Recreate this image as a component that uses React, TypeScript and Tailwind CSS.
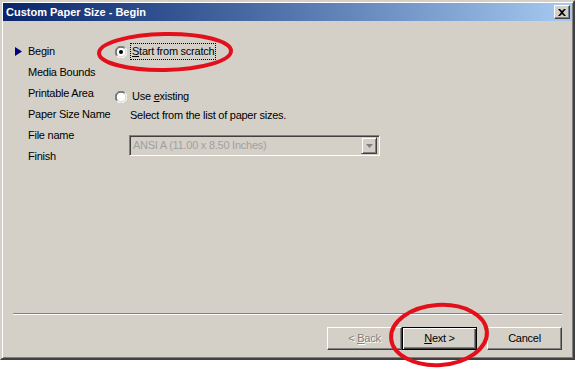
import React from 'react';

const font = { fontFamily: '"Liberation Sans", Arial, sans-serif' };

function Radio({ checked }: { checked?: boolean }) {
  return (
    <svg width="12" height="12" viewBox="0 0 12 12" className="shrink-0">
      <circle cx="6" cy="6" r="5.5" fill="#fff" />
      <path d="M1.8 10.2 A5.5 5.5 0 0 1 10.2 1.8" fill="none" stroke="#808080" strokeWidth="1" />
      <path d="M10.2 1.8 A5.5 5.5 0 0 1 1.8 10.2" fill="none" stroke="#fff" strokeWidth="1" />
      <path d="M2.5 9.5 A4.5 4.5 0 0 1 9.5 2.5" fill="none" stroke="#404040" strokeWidth="1" />
      <path d="M9.5 2.5 A4.5 4.5 0 0 1 2.5 9.5" fill="none" stroke="#d4d0c8" strokeWidth="1" />
      {checked && <circle cx="6" cy="6" r="2" fill="#000" />}
    </svg>
  );
}

const steps = ['Begin', 'Media Bounds', 'Printable Area', 'Paper Size Name', 'File name', 'Finish'];

export default function App() {
  return (
    <div className="relative w-[580px] h-[369px] bg-white overflow-hidden text-[11px] text-black" style={font}>
      <div className="w-[575px] h-[360px] bg-[#d4d0c8] border-2 border-t-[#d4d0c8] border-l-[#d4d0c8] border-r-[#404040] border-b-[#404040] shadow-[inset_1px_1px_0_#fff,inset_-1px_-1px_0_#808080] p-[1px] flex flex-col">
        {/* title bar */}
        <div className="h-[18px] flex items-center justify-between pl-[3px] pr-[2px] bg-gradient-to-r from-[#0a246a] to-[#a6caf0]">
          <span className="text-white font-bold text-[11px] leading-none">Custom Paper Size - Begin</span>
          <div className="w-[16px] h-[14px] bg-[#d4d0c8] border border-t-white border-l-white border-r-[#404040] border-b-[#404040] shadow-[inset_-1px_-1px_0_#808080] flex items-center justify-center">
            <svg width="8" height="7" viewBox="0 0 8 7">
              <path d="M0 0h2l2 2 2-2h2L5 3.5 8 7H6L4 5 2 7H0l3-3.5z" fill="#000" />
            </svg>
          </div>
        </div>

        {/* body */}
        <div className="flex-1 flex pt-[20px] tracking-[-0.25px]">
          <div className="w-[112px] shrink-0 flex flex-col pl-[12px]">
            {steps.map((s, i) => (
              <div key={s} className="h-[21px] flex items-center whitespace-nowrap">
                <div className="w-[13px] shrink-0 flex items-center">
                  {i === 0 && (
                    <svg width="7" height="9" viewBox="0 0 7 9">
                      <path d="M0 0L7 4.5 0 9z" fill="#000080" />
                    </svg>
                  )}
                </div>
                <span>{s}</span>
              </div>
            ))}
          </div>

          <div className="flex flex-col">
            <div className="h-[21px] flex items-center">
              <Radio checked />
              <span className="ml-[3px] h-[17px] px-[1px] flex items-center border border-dotted border-black">
                <span><u>S</u>tart from scratch</span>
              </span>
            </div>
            <div className="h-[21px] mt-[24px] flex items-center">
              <Radio />
              <span className="ml-[5px]">Use <u>e</u>xisting</span>
            </div>
            <div className="h-[16px] flex items-center pl-[15px]">Select from the list of paper sizes.</div>
            <div className="mt-[12px] ml-[14px] w-[251px] h-[21px] border border-t-[#808080] border-l-[#808080] border-r-white border-b-white shadow-[inset_1px_1px_0_#404040,inset_-1px_-1px_0_#d4d0c8] flex items-center justify-between pl-[3px] pr-[2px]">
              <span className="text-[#a0a0a0]">ANSI A (11.00 x 8.50 Inches)</span>
              <div className="w-[16px] h-[17px] bg-[#d4d0c8] border border-t-[#d4d0c8] border-l-[#d4d0c8] border-r-[#404040] border-b-[#404040] shadow-[inset_1px_1px_0_#fff,inset_-1px_-1px_0_#808080] flex items-center justify-center">
                <svg width="7" height="4" viewBox="0 0 7 4">
                  <path d="M0 0h7L3.5 4z" fill="#808080" />
                </svg>
              </div>
            </div>
          </div>
        </div>

        {/* footer */}
        <div className="px-[10px]">
          <div className="h-[2px] border-t border-t-[#808080] border-b border-b-white" />
        </div>
        <div className="mt-[12px] mb-[7px] flex justify-end pr-[10px] tracking-[-0.25px]">
          <button className="w-[75px] h-[23px] bg-[#d4d0c8] border border-t-white border-l-white border-r-[#404040] border-b-[#404040] shadow-[inset_-1px_-1px_0_#808080] text-[#808080] [text-shadow:1px_1px_0_#fff]">
            &lt; <u>B</u>ack
          </button>
          <button className="w-[75px] h-[23px] bg-[#d4d0c8] border border-black shadow-[inset_1px_1px_0_#fff,inset_-1px_-1px_0_#404040,inset_-2px_-2px_0_#808080]">
            <u>N</u>ext &gt;
          </button>
          <button className="ml-[10px] w-[75px] h-[23px] bg-[#d4d0c8] border border-t-white border-l-white border-r-[#404040] border-b-[#404040] shadow-[inset_-1px_-1px_0_#808080]">
            Cancel
          </button>
        </div>
      </div>

      {/* annotation marks */}
      <svg className="absolute inset-0 pointer-events-none" width="580" height="369">
        <ellipse cx="165" cy="52" rx="66" ry="18" fill="none" stroke="#e3101c" strokeWidth="4" transform="rotate(-1 165 52)" />
        <ellipse cx="439" cy="335" rx="48" ry="30" fill="none" stroke="#e3101c" strokeWidth="4" transform="rotate(-4 439 335)" />
      </svg>
    </div>
  );
}
